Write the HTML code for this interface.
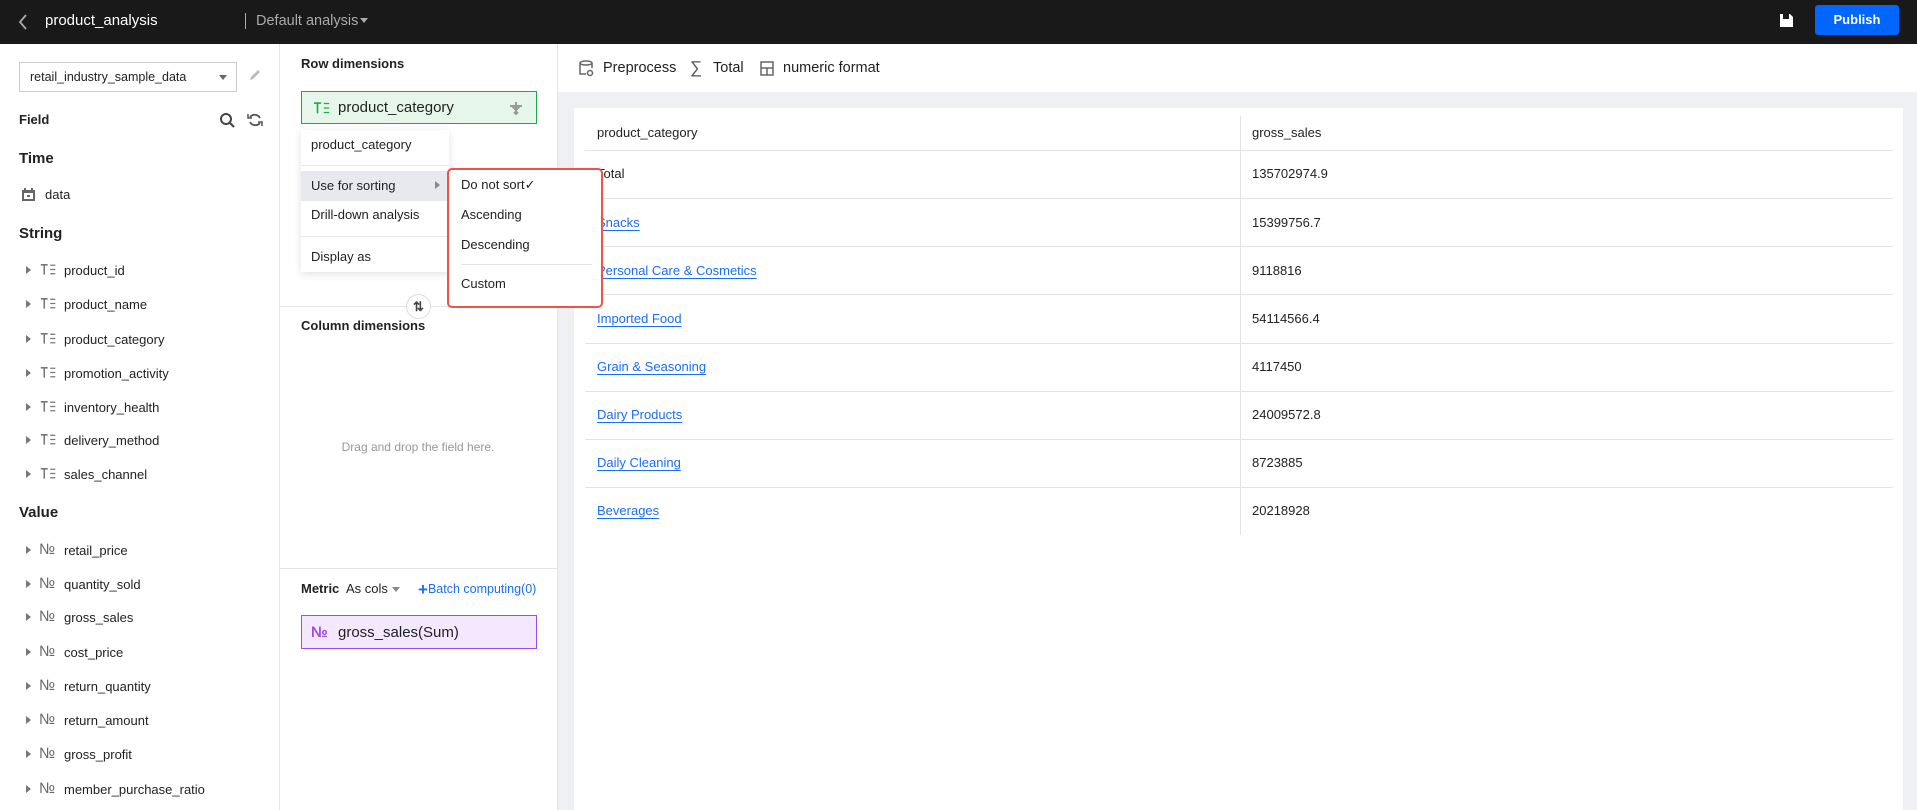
<!DOCTYPE html>
<html><head><meta charset="utf-8"><style>
*{box-sizing:border-box;margin:0;padding:0}
body{width:1917px;height:810px;overflow:hidden;position:relative;background:#fff;font-family:"Liberation Sans",Arial,sans-serif;color:#222;font-size:13px}
.a{position:absolute;white-space:nowrap}
.c{line-height:20px;margin-top:-10px}
.h{font-weight:bold}
.row .ar{position:absolute;left:26px;top:6px;width:0;height:0;border-left:5px solid #777;border-top:4px solid transparent;border-bottom:4px solid transparent}
.row svg{position:absolute;left:40px;top:3px}
.no{color:#666;font-size:15px}
.hl{position:absolute;height:1px;background:#e3e3e3}
a{color:#1b6ef3;text-decoration:underline;text-underline-offset:3px}
</style></head><body>
<svg width="0" height="0" style="position:absolute"><defs>
<symbol id="te" viewBox="0 0 20 14"><path d="M1 1.5h8M5 1.5V13" stroke="currentColor" stroke-width="1.8" fill="none"/><path d="M12 2h6M12 7h6M12 12h6" stroke="currentColor" stroke-width="1.5"/></symbol>
</defs></svg>
<!-- top bar -->
<div class="a" style="left:0;top:0;width:1917px;height:44px;background:#191919"></div>
<svg class="a" style="left:18px;top:14px" width="10" height="16"><path d="M8 1L2 8l6 7" stroke="#aaa" stroke-width="1.8" fill="none"/></svg>
<div class="a c" style="left:45px;top:21px;color:#fff;font-size:15px">product_analysis</div>
<div class="a" style="left:245px;top:13px;width:1px;height:16px;background:#aaa"></div>
<div class="a c" style="left:256px;top:21px;color:#aaa;font-size:14.5px">Default analysis</div>
<div class="a" style="left:360px;top:18px;border-top:5px solid #aaa;border-left:4px solid transparent;border-right:4px solid transparent"></div>
<svg class="a" style="left:1779px;top:13px" width="15" height="15"><path d="M1 1h3v5h6V1h1l3 3v10H1z" fill="#fff"/><rect x="6" y="2" width="2" height="3" fill="#191919"/></svg>
<div class="a" style="left:1815px;top:5px;width:84px;height:30px;background:#0066ff;border-radius:3px;color:#fff;font-weight:bold;font-size:13px;line-height:30px;text-align:center">Publish</div>

<!-- left panel -->
<div class="a" style="left:279px;top:44px;width:1px;height:766px;background:#e6e6e6"></div>
<div class="a" style="left:19px;top:62px;width:218px;height:30px;border:1px solid #ccc"></div>
<div class="a c" style="left:30px;top:77px;font-size:12.5px">retail_industry_sample_data</div>
<div class="a" style="left:219px;top:75px;border-top:5px solid #666;border-left:4px solid transparent;border-right:4px solid transparent"></div>
<svg class="a" style="left:248px;top:68px" width="14" height="14"><path d="M2 12l1-3 7-7 2 2-7 7z" fill="#bbb"/></svg>
<div class="a c h" style="left:19px;top:120px">Field</div>
<svg class="a" style="left:219px;top:112px" width="16" height="16"><circle cx="7" cy="7" r="5" stroke="#444" stroke-width="2" fill="none"/><path d="M11 11l4 4" stroke="#444" stroke-width="2"/></svg>
<svg class="a" style="left:247px;top:112px" width="16" height="16"><path d="M13 6A6 6 0 0 0 3 5M3 10a6 6 0 0 0 10 1" stroke="#555" stroke-width="1.8" fill="none"/><path d="M1 2v4h4M15 14v-4h-4" stroke="#555" stroke-width="1.5" fill="none"/></svg>
<div class="a c h" style="left:19px;top:159px;font-size:15px">Time</div>
<svg class="a" style="left:21px;top:187px" width="15" height="15"><rect x="1" y="3" width="13" height="11" fill="#666"/><rect x="3" y="6" width="9" height="6" fill="#fff"/><rect x="6" y="8" width="3" height="2" fill="#666"/><rect x="3" y="1" width="2" height="3" fill="#666"/><rect x="10" y="1" width="2" height="3" fill="#666"/></svg>
<div class="a c" style="left:45px;top:195px">data</div>
<div class="a c h" style="left:19px;top:234px;font-size:15px">String</div>

<div class="a row" style="left:0;top:260px;width:279px;height:20px;color:#777"><div class="ar"></div><svg width="17" height="13"><use href="#te"/></svg><span class="a" style="left:64px;top:3px;color:#222">product_id</span></div>
<div class="a row" style="left:0;top:294px;width:279px;height:20px;color:#777"><div class="ar"></div><svg width="17" height="13"><use href="#te"/></svg><span class="a" style="left:64px;top:3px;color:#222">product_name</span></div>
<div class="a row" style="left:0;top:329px;width:279px;height:20px;color:#777"><div class="ar"></div><svg width="17" height="13"><use href="#te"/></svg><span class="a" style="left:64px;top:3px;color:#222">product_category</span></div>
<div class="a row" style="left:0;top:363px;width:279px;height:20px;color:#777"><div class="ar"></div><svg width="17" height="13"><use href="#te"/></svg><span class="a" style="left:64px;top:3px;color:#222">promotion_activity</span></div>
<div class="a row" style="left:0;top:397px;width:279px;height:20px;color:#777"><div class="ar"></div><svg width="17" height="13"><use href="#te"/></svg><span class="a" style="left:64px;top:3px;color:#222">inventory_health</span></div>
<div class="a row" style="left:0;top:430px;width:279px;height:20px;color:#777"><div class="ar"></div><svg width="17" height="13"><use href="#te"/></svg><span class="a" style="left:64px;top:3px;color:#222">delivery_method</span></div>
<div class="a row" style="left:0;top:464px;width:279px;height:20px;color:#777"><div class="ar"></div><svg width="17" height="13"><use href="#te"/></svg><span class="a" style="left:64px;top:3px;color:#222">sales_channel</span></div>

<div class="a c h" style="left:19px;top:513px;font-size:15px">Value</div>
<div class="a row" style="left:0;top:540px;width:279px;height:20px"><div class="ar"></div><span class="a no" style="left:39px;top:1px">№</span><span class="a" style="left:64px;top:3px">retail_price</span></div>
<div class="a row" style="left:0;top:574px;width:279px;height:20px"><div class="ar"></div><span class="a no" style="left:39px;top:1px">№</span><span class="a" style="left:64px;top:3px">quantity_sold</span></div>
<div class="a row" style="left:0;top:607px;width:279px;height:20px"><div class="ar"></div><span class="a no" style="left:39px;top:1px">№</span><span class="a" style="left:64px;top:3px">gross_sales</span></div>
<div class="a row" style="left:0;top:642px;width:279px;height:20px"><div class="ar"></div><span class="a no" style="left:39px;top:1px">№</span><span class="a" style="left:64px;top:3px">cost_price</span></div>
<div class="a row" style="left:0;top:676px;width:279px;height:20px"><div class="ar"></div><span class="a no" style="left:39px;top:1px">№</span><span class="a" style="left:64px;top:3px">return_quantity</span></div>
<div class="a row" style="left:0;top:710px;width:279px;height:20px"><div class="ar"></div><span class="a no" style="left:39px;top:1px">№</span><span class="a" style="left:64px;top:3px">return_amount</span></div>
<div class="a row" style="left:0;top:744px;width:279px;height:20px"><div class="ar"></div><span class="a no" style="left:39px;top:1px">№</span><span class="a" style="left:64px;top:3px">gross_profit</span></div>
<div class="a row" style="left:0;top:779px;width:279px;height:20px"><div class="ar"></div><span class="a no" style="left:39px;top:1px">№</span><span class="a" style="left:64px;top:3px">member_purchase_ratio</span></div>

<!-- middle panel -->
<div class="a" style="left:557px;top:44px;width:1px;height:766px;background:#e6e6e6"></div>
<div class="a c h" style="left:301px;top:64px">Row dimensions</div>
<div class="a" style="left:301px;top:91px;width:236px;height:33px;background:#e6f6ea;border:1.5px solid #1aaa4a"></div>
<svg class="a" style="left:313px;top:101px;color:#1aaa4a" width="18" height="14"><use href="#te"/></svg>
<div class="a c" style="left:338px;top:108px;font-size:15px">product_category</div>
<svg class="a" style="left:508px;top:100px" width="16" height="16"><path d="M8 2v12M2 6h12M4 6l4 4 4-4M6 12l2 2 2-2" stroke="#999" stroke-width="2" fill="none"/></svg>
<div class="hl" style="left:279px;top:306px;width:278px"></div>
<div class="a c h" style="left:301px;top:326px">Column dimensions</div>
<div class="a c" style="left:418px;top:447px;transform:translateX(-50%);color:#999;font-size:12px">Drag and drop the field here.</div>
<div class="a" style="left:406px;top:294px;width:25px;height:25px;border-radius:50%;border:1px solid #ddd;background:#fff;font-size:13px;font-weight:bold;line-height:23px;text-align:center;color:#444">⇅</div>
<div class="hl" style="left:279px;top:568px;width:278px"></div>
<div class="a c h" style="left:301px;top:589px">Metric</div>
<div class="a c" style="left:346px;top:589px">As cols</div>
<div class="a" style="left:392px;top:587px;border-top:5px solid #888;border-left:4px solid transparent;border-right:4px solid transparent"></div>
<div class="a c" style="left:418px;top:589px;color:#1b6ef3;font-size:12.5px"><b style="font-size:17px;vertical-align:-2px">+</b>Batch computing(0)</div>
<div class="a" style="left:301px;top:615px;width:236px;height:34px;background:#f3e8fd;border:1.5px solid #a04ae8"></div>
<div class="a c" style="left:311px;top:633px;color:#a04ae8;font-weight:bold;font-size:15px">№</div>
<div class="a c" style="left:338px;top:633px;font-size:15px">gross_sales(Sum)</div>

<!-- right -->
<div class="a" style="left:558px;top:92px;width:1359px;height:718px;background:#eff0f4"></div>
<svg class="a" style="left:579px;top:60px" width="15" height="17"><ellipse cx="7" cy="3" rx="6" ry="2" stroke="#666" stroke-width="1.5" fill="none"/><path d="M1 3v11h6M13 3v5" stroke="#666" stroke-width="1.5" fill="none"/><circle cx="11" cy="13" r="2.5" stroke="#666" stroke-width="1.5" fill="none"/></svg>
<div class="a c" style="left:603px;top:68px;font-size:14.5px">Preprocess</div>
<div class="a c" style="left:690px;top:68px;font-size:17px;color:#555">∑</div>
<div class="a c" style="left:713px;top:68px;font-size:14.5px">Total</div>
<svg class="a" style="left:760px;top:61px" width="14" height="15"><rect x="1" y="1" width="12" height="13" stroke="#666" stroke-width="1.5" fill="none"/><path d="M1 7h12M7 7v7" stroke="#666" stroke-width="1.5"/></svg>
<div class="a c" style="left:783px;top:68px;font-size:14.5px">numeric format</div>

<div class="a" style="left:574px;top:108px;width:1329px;height:702px;background:#fff"></div>
<div class="a" style="left:1240px;top:116px;width:1px;height:419px;background:#e3e3e3"></div>
<div class="hl" style="left:585px;top:150px;width:1308px"></div>
<div class="hl" style="left:585px;top:198px;width:1308px"></div>
<div class="hl" style="left:585px;top:246px;width:1308px"></div>
<div class="hl" style="left:585px;top:294px;width:1308px"></div>
<div class="hl" style="left:585px;top:343px;width:1308px"></div>
<div class="hl" style="left:585px;top:391px;width:1308px"></div>
<div class="hl" style="left:585px;top:439px;width:1308px"></div>
<div class="hl" style="left:585px;top:487px;width:1308px"></div>
<div class="a c" style="left:597px;top:133px">product_category</div><div class="a c" style="left:1252px;top:133px">gross_sales</div>
<div class="a c" style="left:597px;top:174px">Total</div><div class="a c" style="left:1252px;top:174px">135702974.9</div>
<div class="a c" style="left:597px;top:223px"><a>Snacks</a></div><div class="a c" style="left:1252px;top:223px">15399756.7</div>
<div class="a c" style="left:597px;top:271px"><a>Personal Care &amp; Cosmetics </a></div><div class="a c" style="left:1252px;top:271px">9118816</div>
<div class="a c" style="left:597px;top:319px"><a>Imported Food</a></div><div class="a c" style="left:1252px;top:319px">54114566.4</div>
<div class="a c" style="left:597px;top:367px"><a>Grain &amp; Seasoning</a></div><div class="a c" style="left:1252px;top:367px">4117450</div>
<div class="a c" style="left:597px;top:415px"><a>Dairy Products</a></div><div class="a c" style="left:1252px;top:415px">24009572.8</div>
<div class="a c" style="left:597px;top:463px"><a>Daily Cleaning</a></div><div class="a c" style="left:1252px;top:463px">8723885</div>
<div class="a c" style="left:597px;top:511px"><a>Beverages</a></div><div class="a c" style="left:1252px;top:511px">20218928</div>

<!-- dropdown menu -->
<div class="a" style="left:301px;top:130px;width:148px;height:142px;background:#fff;box-shadow:0 2px 8px rgba(0,0,0,.12)"></div>
<div class="a c" style="left:311px;top:145px">product_category</div>
<div class="hl" style="left:301px;top:165px;width:148px;background:#e8e8ec"></div>
<div class="a" style="left:301px;top:171px;width:148px;height:30px;background:#e8e9ee"></div>
<div class="a c" style="left:311px;top:186px">Use for sorting</div>
<div class="a" style="left:435px;top:181px;border-left:5px solid #888;border-top:4px solid transparent;border-bottom:4px solid transparent"></div>
<div class="a c" style="left:311px;top:215px">Drill-down analysis</div>
<div class="hl" style="left:301px;top:236px;width:148px;background:#e8e8ec"></div>
<div class="a c" style="left:311px;top:257px">Display as</div>

<div class="a" style="left:447px;top:168px;width:156px;height:140px;background:#fff;border:2.5px solid #f0524a;border-radius:5px"></div>
<div class="a c" style="left:461px;top:185px">Do not sort✓</div>
<div class="a c" style="left:461px;top:215px">Ascending</div>
<div class="a c" style="left:461px;top:245px">Descending</div>
<div class="hl" style="left:461px;top:264px;width:131px"></div>
<div class="a c" style="left:461px;top:284px">Custom</div>
</body></html>
